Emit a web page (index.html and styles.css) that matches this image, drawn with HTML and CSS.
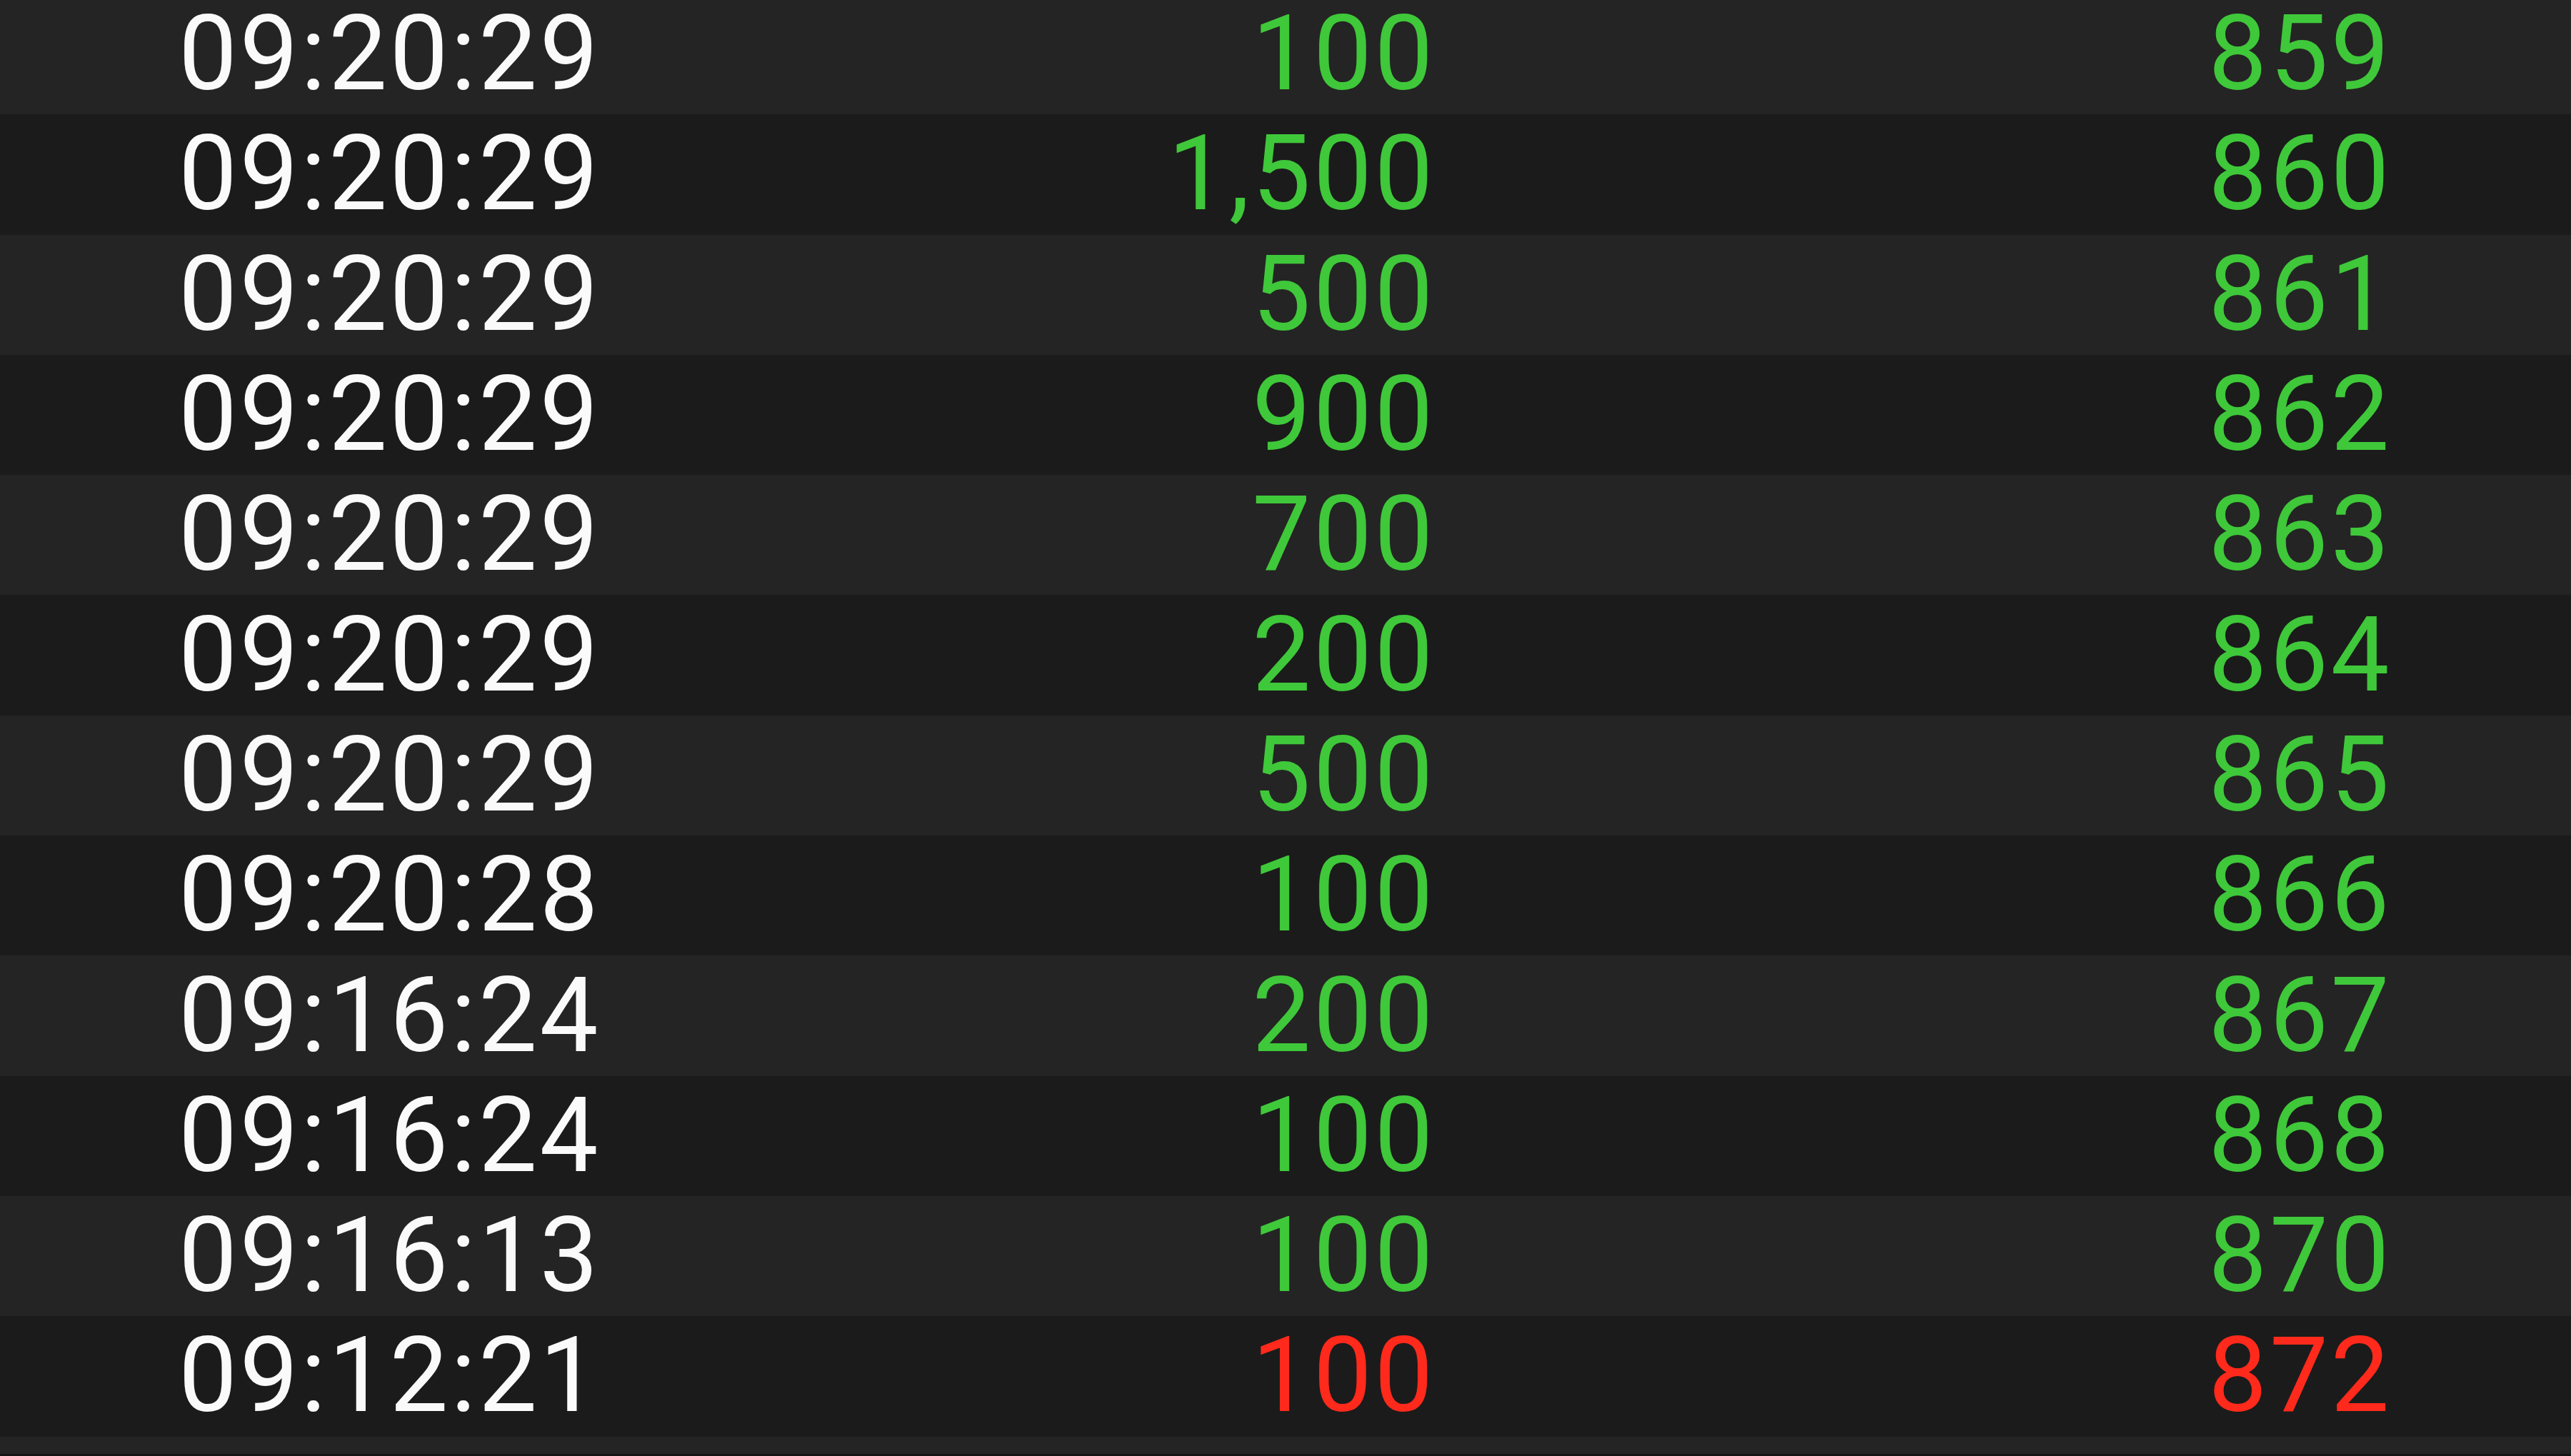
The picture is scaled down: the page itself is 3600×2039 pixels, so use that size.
FILE: index.html
```html
<!DOCTYPE html>
<html lang="en">
<head>
    <meta charset="UTF-8">
    <meta name="viewport" content="width=device-width, initial-scale=1.0">
    <title>Trade Ticks</title>
    <link rel="stylesheet" href="styles.css">
</head>
<body>

    <div class="ticks">
        <!-- Tick rows, newest first -->
        <div class="tick-row">
            <span class="time">09:20:29</span>
            <span class="volume up">100</span>
            <span class="price up">859</span>
        </div>
        <div class="tick-row">
            <span class="time">09:20:29</span>
            <span class="volume up">1,500</span>
            <span class="price up">860</span>
        </div>
        <div class="tick-row">
            <span class="time">09:20:29</span>
            <span class="volume up">500</span>
            <span class="price up">861</span>
        </div>
        <div class="tick-row">
            <span class="time">09:20:29</span>
            <span class="volume up">900</span>
            <span class="price up">862</span>
        </div>
        <div class="tick-row">
            <span class="time">09:20:29</span>
            <span class="volume up">700</span>
            <span class="price up">863</span>
        </div>
        <div class="tick-row">
            <span class="time">09:20:29</span>
            <span class="volume up">200</span>
            <span class="price up">864</span>
        </div>
        <div class="tick-row">
            <span class="time">09:20:29</span>
            <span class="volume up">500</span>
            <span class="price up">865</span>
        </div>
        <div class="tick-row">
            <span class="time">09:20:28</span>
            <span class="volume up">100</span>
            <span class="price up">866</span>
        </div>
        <div class="tick-row">
            <span class="time">09:16:24</span>
            <span class="volume up">200</span>
            <span class="price up">867</span>
        </div>
        <div class="tick-row">
            <span class="time">09:16:24</span>
            <span class="volume up">100</span>
            <span class="price up">868</span>
        </div>
        <div class="tick-row">
            <span class="time">09:16:13</span>
            <span class="volume up">100</span>
            <span class="price up">870</span>
        </div>
        <div class="tick-row">
            <span class="time">09:12:21</span>
            <span class="volume down">100</span>
            <span class="price down">872</span>
        </div>
        <!-- next row, only its top edge is visible -->
        <div class="tick-tail"></div>
    </div>

</body>
</html>
```

FILE: styles.css
```css
html, body {
    height: 100%;
}
body {
    margin: 0;
    background-color: #1b1b1b;
    font-family: Roboto, "Noto Sans", sans-serif;
    overflow: hidden;
}
.ticks {
    margin-top: -8px;
}
.tick-row {
    display: grid;
    grid-template-columns: 600px 1160px 1339px;
    align-items: center;
    height: 168.3px;
    padding-left: 250px;
    font-size: 146px;
    line-height: 1;
    letter-spacing: 3.5px;
    background-color: #242424;
}
.tick-row:nth-child(even) {
    background-color: #1b1b1b;
}
.tick-tail {
    height: 24px;
    background-color: #242424;
    border-bottom: 4px solid #141414;
}
.time {
    color: #fafafa;
}
.volume, .price {
    text-align: right;
}
.up {
    color: #3fc83a;
}
.down {
    color: #ff2a1c;
}
```
